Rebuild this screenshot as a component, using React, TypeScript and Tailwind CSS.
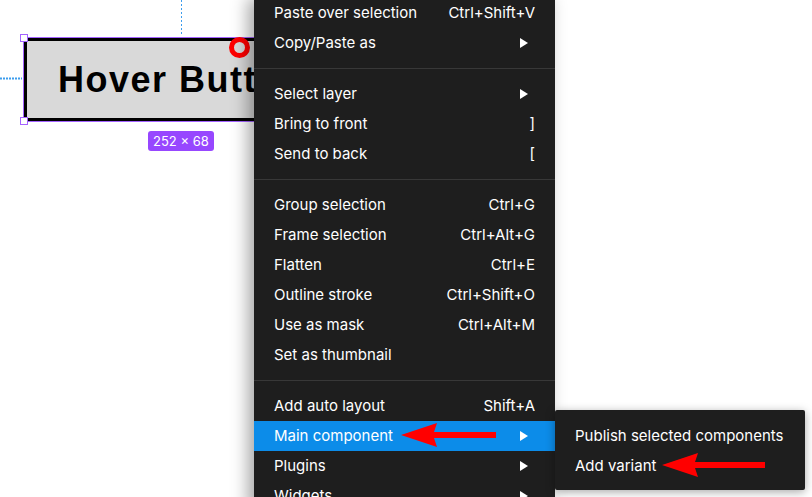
import React from 'react';

type Item = { label: string; hint?: string; sub?: boolean; active?: boolean } | 'sep';

const menu: Item[] = [
  { label: 'Paste over selection', hint: 'Ctrl+Shift+V' },
  { label: 'Copy/Paste as', sub: true },
  'sep',
  { label: 'Select layer', sub: true },
  { label: 'Bring to front', hint: ']' },
  { label: 'Send to back', hint: '[' },
  'sep',
  { label: 'Group selection', hint: 'Ctrl+G' },
  { label: 'Frame selection', hint: 'Ctrl+Alt+G' },
  { label: 'Flatten', hint: 'Ctrl+E' },
  { label: 'Outline stroke', hint: 'Ctrl+Shift+O' },
  { label: 'Use as mask', hint: 'Ctrl+Alt+M' },
  { label: 'Set as thumbnail' },
  'sep',
  { label: 'Add auto layout', hint: 'Shift+A' },
  { label: 'Main component', sub: true, active: true },
  { label: 'Plugins', sub: true },
  { label: 'Widgets', sub: true },
];

function Caret() {
  return (
    <svg width="8" height="10" viewBox="0 0 8 10" className="mr-[7px]">
      <path d="M0 0 L8 5 L0 10 Z" fill="#ffffff" />
    </svg>
  );
}

function RedArrow({ width }: { width: number }) {
  return (
    <svg width={width} height="26" viewBox={`0 0 ${width} 26`}>
      <path d={`M0 13 L36 1 L33 10 L${width} 10 L${width} 16 L33 16 L36 25 Z`} fill="#ff0000" />
    </svg>
  );
}

export default function App() {
  return (
    <div className="relative w-[812px] h-[497px] overflow-hidden bg-white" style={{ fontFamily: 'Inter, "Noto Sans", sans-serif' }}>
      {/* guides */}
      <svg className="absolute left-[180px] top-0" width="3" height="36">
        <line x1="1.5" y1="0" x2="1.5" y2="36" stroke="#3d9ded" strokeWidth="1" strokeDasharray="2 2" />
      </svg>
      <svg className="absolute left-0 top-[77px]" width="22" height="3">
        <line x1="0" y1="1.5" x2="22" y2="1.5" stroke="#3d9ded" strokeWidth="2" strokeDasharray="2 1" />
      </svg>

      {/* selected frame */}
      <div className="absolute left-[23px] top-[37px] w-[260px] h-[85px] border border-[#a463ff]">
        <div className="w-full h-full border-[3px] border-black bg-[#d9d9d9] flex items-center pl-[31px] overflow-hidden">
          <span className="whitespace-nowrap text-[36px] font-bold text-black tracking-[1.5px]" style={{ fontFamily: '"Liberation Sans", Arial, sans-serif' }}>
            Hover Button
          </span>
        </div>
        <div className="absolute -left-[4px] -top-[4px] w-[8px] h-[8px] bg-white border border-[#a463ff]" />
        <div className="absolute -left-[4px] -bottom-[4px] w-[8px] h-[8px] bg-white border border-[#a463ff]" />
        <div className="absolute left-[205px] -top-[1px] w-[21px] h-[21px] rounded-full border-[5px] border-[#ff0000]" />
      </div>
      <div className="absolute left-[148px] top-[131px] h-[20px] px-[5px] rounded-[3px] bg-[#9747ff] text-white text-[13px] leading-[20px]">
        252 × 68
      </div>

      {/* context menu */}
      <div className="absolute left-[254px] top-[-2px] w-[301px] flex flex-col bg-[#1e1e1e] text-white text-[15px] shadow-[-6px_0_16px_rgba(0,0,0,0.35)]">
        {menu.map((it, i) =>
          it === 'sep' ? (
            <div key={i} className="py-[10px]">
              <div className="h-px bg-[#383838]" />
            </div>
          ) : (
            <div
              key={i}
              className={`h-[30px] flex items-center justify-between px-[20px] ${it.active ? 'bg-[#0c8ce9]' : ''}`}
            >
              <span>{it.label}</span>
              {it.hint && <span>{it.hint}</span>}
              {it.sub && <Caret />}
            </div>
          )
        )}
      </div>

      {/* submenu */}
      <div className="absolute left-[555px] top-[410px] w-[250px] flex flex-col pt-[11px] pb-[9px] rounded-[2px] bg-[#1e1e1e] text-white text-[15px] shadow-[0_2px_10px_rgba(0,0,0,0.35)]">
        <div className="h-[30px] flex items-center pl-[20px]">Publish selected components</div>
        <div className="h-[30px] flex items-center pl-[20px]">Add variant</div>
      </div>

      {/* annotations */}
      <div className="absolute left-[401px] top-[422px]">
        <RedArrow width={95} />
      </div>
      <div className="absolute left-[662px] top-[452px]">
        <RedArrow width={103} />
      </div>
    </div>
  );
}
